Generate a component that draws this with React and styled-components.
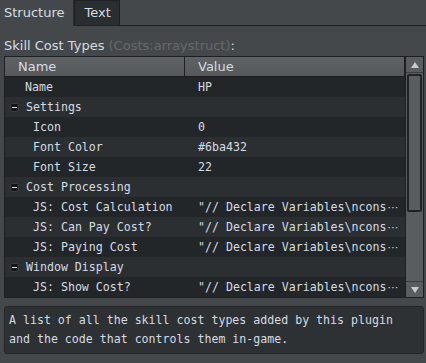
import React from "react";
import styled, { createGlobalStyle } from "styled-components";

const Global = createGlobalStyle`
  html, body { margin: 0; padding: 0; background: #45484b; }
  body { font-family: "DejaVu Sans", sans-serif; }
  * { box-sizing: border-box; }
`;

const Page = styled.div`
  width: 426px;
  height: 363px;
  background: #45484b;
  display: flex;
  flex-direction: column;
  overflow: hidden;
`;

const TabBar = styled.div`
  display: flex;
  height: 26px;
  align-items: stretch;
`;

const Tab = styled.div`
  padding: 0 7px 0 4px;
  font-size: 13px;
  line-height: 26px;
  color: #d4dce4;
  ${(p) =>
    p.$active
      ? `background: #45484b; border-right: 1px solid #2a2c2e; padding-right: 9px;`
      : `background: #2b2e31; border: 1px solid #1e2022; border-bottom: 1px solid #1e2022; line-height: 24px; padding: 0 8px 0 9px;`}
`;

const TabFill = styled.div`
  flex: 1;
  border-bottom: 1px solid #1e2022;
`;

const Body = styled.div`
  display: flex;
  flex-direction: column;
  padding: 10px 2px 0 4px;
`;

const Label = styled.div`
  font-size: 13px;
  line-height: 20px;
  color: #d4dce4;
  height: 20px;
`;

const Muted = styled.span`
  color: #64686c;
`;

const TableFrame = styled.div`
  display: flex;
  border: 1px solid #1d1f21;
  height: 242px;
  width: 420px;
`;

const Table = styled.div`
  flex: 1;
  display: flex;
  flex-direction: column;
  background: #2c2f32;
`;

const HeaderRow = styled.div`
  display: grid;
  grid-template-columns: 180px 1fr;
  height: 20px;
  background: linear-gradient(#5e6265, #56595c);
  border-bottom: 1px solid #1d1f21;
  border-right: 1px solid #1d1f21;
`;

const HeaderCell = styled.div`
  font-size: 13px;
  line-height: 19px;
  color: #d4dce4;
  padding-left: ${(p) => p.$pad}px;
  border-right: ${(p) => (p.$divider ? "1px solid #1d1f21" : "none")};
`;

const Row = styled.div`
  display: grid;
  grid-template-columns: 180px 1fr;
  height: 20px;
  background: ${(p) => (p.$odd ? "#2c2f32" : "#232628")};
  font-family: "DejaVu Sans Mono", monospace;
  font-size: 11.6px;
  line-height: 20px;
  color: #d4dce4;
  white-space: nowrap;
`;

const NameCell = styled.div`
  display: flex;
  align-items: center;
  padding-left: ${(p) => p.$indent}px;
  overflow: hidden;
`;

const ValueCell = styled.div`
  padding-left: 13px;
  overflow: hidden;
`;

const Ellipsis = styled.span`
  font-family: "DejaVu Sans", sans-serif;
  font-size: 11px;
  margin-left: 1px;
`;

const Toggle = styled.span`
  display: inline-flex;
  align-items: center;
  justify-content: center;
  width: 9px;
  height: 9px;
  margin-right: 7px;
  border-radius: 2px;
  background: #131516;
  border: 1px solid #3a3d40;
  &::after {
    content: "";
    width: 5px;
    height: 1px;
    background: #d4dce4;
  }
`;

const Scrollbar = styled.div`
  width: 18px;
  display: flex;
  flex-direction: column;
  background: #5a5d60;
  border-left: 1px solid #1d1f21;
`;

const ArrowBtn = styled.div`
  height: 16px;
  display: flex;
  align-items: center;
  justify-content: center;
  background: #5a5d60;
  ${(p) => (p.$down ? "border-top: 1px solid #3a3d40;" : "border-bottom: 1px solid #3a3d40;")}
`;

const Track = styled.div`
  flex: 1;
  display: flex;
  flex-direction: column;
  padding: 0 1px;
`;

const Thumb = styled.div`
  height: 138px;
  margin-top: 1px;
  background: #5a5d60;
  border: 2px solid #202224;
  border-radius: 2px;
`;

const Desc = styled.div`
  margin-top: 8px;
  width: 420px;
  height: 48px;
  background: #2e3134;
  border: 1px solid #222426;
  border-radius: 3px;
  padding: 4px 0 0 4px;
  font-family: "DejaVu Sans Mono", monospace;
  font-size: 11.6px;
  line-height: 19px;
  color: #d4dce4;
`;

const Tri = ({ down }) => (
  <svg width="10" height="8" viewBox="0 0 10 8">
    <path d={down ? "M1 1 L9 1 L5 7 Z" : "M1 7 L9 7 L5 1 Z"} fill="#c5ccd3" />
  </svg>
);

const JS = "\"// Declare Variables\\ncons";

const rows = [
  { name: "Name", value: "HP", indent: 20 },
  { name: "Settings", group: true },
  { name: "Icon", value: "0", indent: 28 },
  { name: "Font Color", value: "#6ba432", indent: 28 },
  { name: "Font Size", value: "22", indent: 28 },
  { name: "Cost Processing", group: true },
  { name: "JS: Cost Calculation", value: JS, more: true, indent: 28 },
  { name: "JS: Can Pay Cost?", value: JS, more: true, indent: 28 },
  { name: "JS: Paying Cost", value: JS, more: true, indent: 28 },
  { name: "Window Display", group: true },
  { name: "JS: Show Cost?", value: JS, more: true, indent: 28 },
];

export default function App() {
  return (
    <Page>
      <Global />
      <TabBar>
        <Tab $active>Structure</Tab>
        <Tab>Text</Tab>
        <TabFill />
      </TabBar>
      <Body>
        <Label>
          Skill Cost Types <Muted>(Costs:arraystruct)</Muted>:
        </Label>
        <TableFrame>
          <Table>
            <HeaderRow>
              <HeaderCell $pad={13} $divider>Name</HeaderCell>
              <HeaderCell $pad={13}>Value</HeaderCell>
            </HeaderRow>
            {rows.map((r, i) => (
              <Row key={i} $odd={i % 2 === 1}>
                <NameCell $indent={r.group ? 5 : r.indent}>
                  {r.group && <Toggle />}
                  {r.name}
                </NameCell>
                <ValueCell>
                  {r.value || ""}
                  {r.more && <Ellipsis>{"\u22EF"}</Ellipsis>}
                </ValueCell>
              </Row>
            ))}
          </Table>
          <Scrollbar>
            <ArrowBtn><Tri /></ArrowBtn>
            <Track><Thumb /></Track>
            <ArrowBtn $down><Tri down /></ArrowBtn>
          </Scrollbar>
        </TableFrame>
        <Desc>
          A list of all the skill cost types added by this plugin
          <br />
          and the code that controls them in-game.
        </Desc>
      </Body>
    </Page>
  );
}
